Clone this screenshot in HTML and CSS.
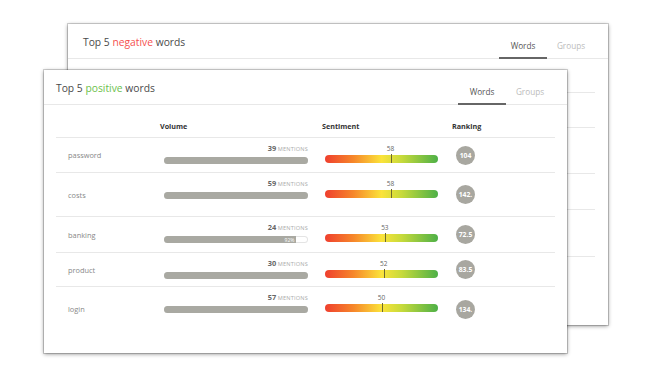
FILE: index.html
```html
<!DOCTYPE html>
<html lang="en">
<head>
    <meta charset="UTF-8">
    <title>Top words</title>
    <link rel="stylesheet" href="styles.css">
</head>
<body>
    <div class="stage">
        <!-- back card: negative words -->
        <div class="card card-back">
            <div class="card-head">
                <div class="card-title">Top 5 <span class="neg">negative</span> words</div>
                <div class="tabs">
                    <div class="tab tab-active">Words</div>
                    <div class="tab">Groups</div>
                </div>
            </div>
            <div class="word-table">
                <div class="table-head back-head"></div>
                <div class="table-row back-row h35"></div>
                <div class="table-row back-row h46"></div>
                <div class="table-row back-row h36"></div>
                <div class="table-row back-row h47"></div>
            </div>
        </div>

        <!-- front card: positive words -->
        <div class="card card-front">
            <div class="card-head">
                <div class="card-title">Top 5 <span class="pos">positive</span> words</div>
                <div class="tabs">
                    <div class="tab tab-active">Words</div>
                    <div class="tab">Groups</div>
                </div>
            </div>
            <div class="word-table">
                <div class="table-head">
                    <div></div>
                    <div>Volume</div>
                    <div>Sentiment</div>
                    <div>Ranking</div>
                </div>

                <div class="table-row h35">
                    <div class="cell-word">password</div>
                    <div class="cell-volume">
                        <div class="mentions"><b>39</b> MENTIONS</div>
                        <div class="vol-track"><div class="vol-fill" style="width: 100%"></div></div>
                    </div>
                    <div class="cell-sentiment">
                        <div class="senti-value" style="margin-left: 58%"><span>58</span></div>
                        <div class="senti-bar"><div class="senti-marker" style="left: 58%"></div></div>
                    </div>
                    <div class="cell-rank"><div class="rank-badge">104</div></div>
                </div>

                <div class="table-row h44">
                    <div class="cell-word">costs</div>
                    <div class="cell-volume">
                        <div class="mentions"><b>59</b> MENTIONS</div>
                        <div class="vol-track"><div class="vol-fill" style="width: 100%"></div></div>
                    </div>
                    <div class="cell-sentiment">
                        <div class="senti-value" style="margin-left: 58%"><span>58</span></div>
                        <div class="senti-bar"><div class="senti-marker" style="left: 58%"></div></div>
                    </div>
                    <div class="cell-rank"><div class="rank-badge">142.</div></div>
                </div>

                <div class="table-row h36">
                    <div class="cell-word">banking</div>
                    <div class="cell-volume">
                        <div class="mentions"><b>24</b> MENTIONS</div>
                        <div class="vol-track"><div class="vol-fill" style="width: 92%"><span class="fill-pct">92%</span></div></div>
                    </div>
                    <div class="cell-sentiment">
                        <div class="senti-value" style="margin-left: 53%"><span>53</span></div>
                        <div class="senti-bar"><div class="senti-marker" style="left: 53%"></div></div>
                    </div>
                    <div class="cell-rank"><div class="rank-badge">72.5</div></div>
                </div>

                <div class="table-row h34">
                    <div class="cell-word">product</div>
                    <div class="cell-volume">
                        <div class="mentions"><b>30</b> MENTIONS</div>
                        <div class="vol-track"><div class="vol-fill" style="width: 100%"></div></div>
                    </div>
                    <div class="cell-sentiment">
                        <div class="senti-value" style="margin-left: 52%"><span>52</span></div>
                        <div class="senti-bar"><div class="senti-marker" style="left: 52%"></div></div>
                    </div>
                    <div class="cell-rank"><div class="rank-badge">83.5</div></div>
                </div>

                <div class="table-row h44 last">
                    <div class="cell-word">login</div>
                    <div class="cell-volume">
                        <div class="mentions"><b>57</b> MENTIONS</div>
                        <div class="vol-track"><div class="vol-fill" style="width: 100%"></div></div>
                    </div>
                    <div class="cell-sentiment">
                        <div class="senti-value" style="margin-left: 50%"><span>50</span></div>
                        <div class="senti-bar"><div class="senti-marker" style="left: 50%"></div></div>
                    </div>
                    <div class="cell-rank"><div class="rank-badge">134.</div></div>
                </div>
            </div>
        </div>
    </div>
</body>
</html>
```

FILE: styles.css
```css
body {
    margin: 0;
    background: #ffffff;
    font-family: 'Open Sans', 'Liberation Sans', sans-serif;
    color: #555;
}

.stage {
    display: grid;
    width: 650px;
    height: 373px;
}

/* Cards share one grid cell, the front one overlaps the back one */
.card {
    grid-area: 1 / 1;
    background: #fff;
    box-sizing: border-box;
    box-shadow: 0 0 0 1px rgba(0, 0, 0, 0.16), 0 1px 4px rgba(0, 0, 0, 0.45);
}

.card-back {
    margin: 24px 0 0 68px;
    width: 540px;
    height: 301px;
}

.card-front {
    margin: 70px 0 0 44px;
    width: 523px;
    height: 283px;
}

.card-head {
    display: flex;
    justify-content: space-between;
    height: 34px;
    padding: 0 13px 0 12px;
    border-bottom: 1px solid #e8e8e8;
}

.card-back .card-head {
    padding-left: 15px;
}

.card-title {
    font-size: 10.3px;
    line-height: 14px;
    padding-top: 11px;
    color: #4a4a4a;
}

.neg {
    color: #f5504f;
}

.pos {
    color: #6cbf4c;
}

.tabs {
    display: flex;
}

.tab {
    width: 48px;
    height: 35px;
    box-sizing: border-box;
    padding-top: 16px;
    line-height: 12px;
    text-align: center;
    font-size: 8.2px;
    color: #bbb;
}

.tab-active {
    color: #555;
    border-bottom: 2px solid #666;
}

/* Table */
.word-table {
    padding: 0 12px;
}

.card-back .word-table {
    padding: 0 13px;
}

.table-head,
.table-row {
    display: grid;
    grid-template-columns: 104px 162px 130px 1fr;
    box-sizing: border-box;
    border-bottom: 1px solid #e8e8e8;
}

.table-head {
    height: 33px;
    align-items: end;
    padding-bottom: 6px;
    font-size: 7.2px;
    font-weight: bold;
    line-height: 10px;
    color: #333;
}

.back-head {
    height: 34px;
}

.table-row.last {
    border-bottom: none;
}

.h34 { height: 34px; }
.h35 { height: 35px; }
.h36 { height: 36px; }
.h44 { height: 44px; }
.h46 { height: 46px; }
.h47 { height: 47px; }

.cell-word {
    align-self: center;
    padding-left: 12px;
    font-size: 7.4px;
    color: #888;
}

.cell-volume {
    padding: 6px 0 0 4px;
}

.mentions {
    width: 144px;
    text-align: right;
    font-size: 5.6px;
    line-height: 8px;
    letter-spacing: 0.2px;
    color: #aaa;
}

.mentions b {
    font-size: 7.4px;
    color: #666;
    letter-spacing: 0;
}

.vol-track {
    width: 144px;
    height: 7px;
    margin-top: 4px;
    box-sizing: border-box;
    border-radius: 4px;
    background: #fff;
    box-shadow: inset 0 0 0 1px #e4e4e4;
    overflow: hidden;
}

.vol-fill {
    height: 100%;
    background: #a9a9a2;
    display: flex;
    justify-content: flex-end;
    align-items: center;
}

.fill-pct {
    font-size: 5px;
    color: #fff;
    padding-right: 2px;
}

.cell-sentiment {
    padding: 7px 0 0 3px;
    width: 113px;
}

.senti-value {
    width: 0;
    display: flex;
    justify-content: center;
    font-size: 6.5px;
    line-height: 8px;
    color: #666;
}

.senti-bar {
    position: relative;
    width: 113px;
    height: 8px;
    margin-top: 2px;
    border-radius: 4px;
    background: linear-gradient(to right, #ef3f2e 0%, #f6862a 25%, #fbe33a 50%, #c6da3b 68%, #4db047 100%);
}

.senti-marker {
    position: absolute;
    top: -1px;
    bottom: 0;
    width: 1px;
    background: #6d6a30;
}

.cell-rank {
    display: flex;
    align-items: center;
    padding-left: 4px;
}

.rank-badge {
    width: 19px;
    height: 19px;
    border-radius: 50%;
    background: #a8a7a0;
    color: #fff;
    font-size: 6.8px;
    font-weight: bold;
    line-height: 19px;
    text-align: center;
    overflow: hidden;
    white-space: nowrap;
}
```
